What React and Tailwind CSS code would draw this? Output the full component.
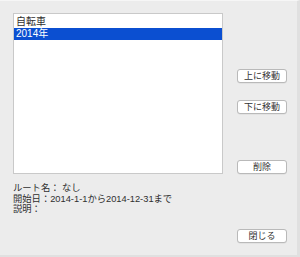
const Btn = ({ children, className = '' }) => (
  <button
    className={`w-[50px] h-[14px] rounded-[3px] border border-[#b9b9b9] bg-white text-[9px] leading-[12px] text-[#333] shadow-[0_0.5px_0.5px_rgba(0,0,0,0.08)] ${className}`}
  >
    {children}
  </button>
)

export default function App() {
  return (
    <div
      className="flex flex-col w-[300px] h-[257px] bg-[#ececec] border-t border-t-[#f6f6f6] border-r-[3px] border-r-[#e0e0e0] border-b-[2px] border-b-[#e0e0e0] pt-[12px] pl-[13px] pr-[10px] pb-[12px] text-[#2f2f2f]"
      style={{ fontFamily: '"Liberation Sans", "Noto Sans CJK JP", sans-serif' }}
    >
      <div className="flex">
        <div className="w-[210px] h-[161px] bg-white border border-[#c9c9c9] pt-px text-[10px] leading-[12px]">
          <div className="px-[2px] h-[13px] leading-[13px]">自転車</div>
          <div className="px-[2px] h-[12px] leading-[12px] bg-[#0b4fd1] text-white">2014年</div>
        </div>
        <div className="ml-[14px] flex flex-col">
          <Btn className="mt-[56px]">上に移動</Btn>
          <Btn className="mt-[17px]">下に移動</Btn>
          <Btn className="mt-auto">削除</Btn>
        </div>
      </div>
      <div className="mt-[9px] text-[9.3px] leading-[10.5px]">
        <div>ルート名： なし</div>
        <div>開始日：2014-1-1から2014-12-31まで</div>
        <div>説明：</div>
      </div>
      <div className="mt-auto flex justify-end">
        <Btn>閉じる</Btn>
      </div>
    </div>
  )
}
